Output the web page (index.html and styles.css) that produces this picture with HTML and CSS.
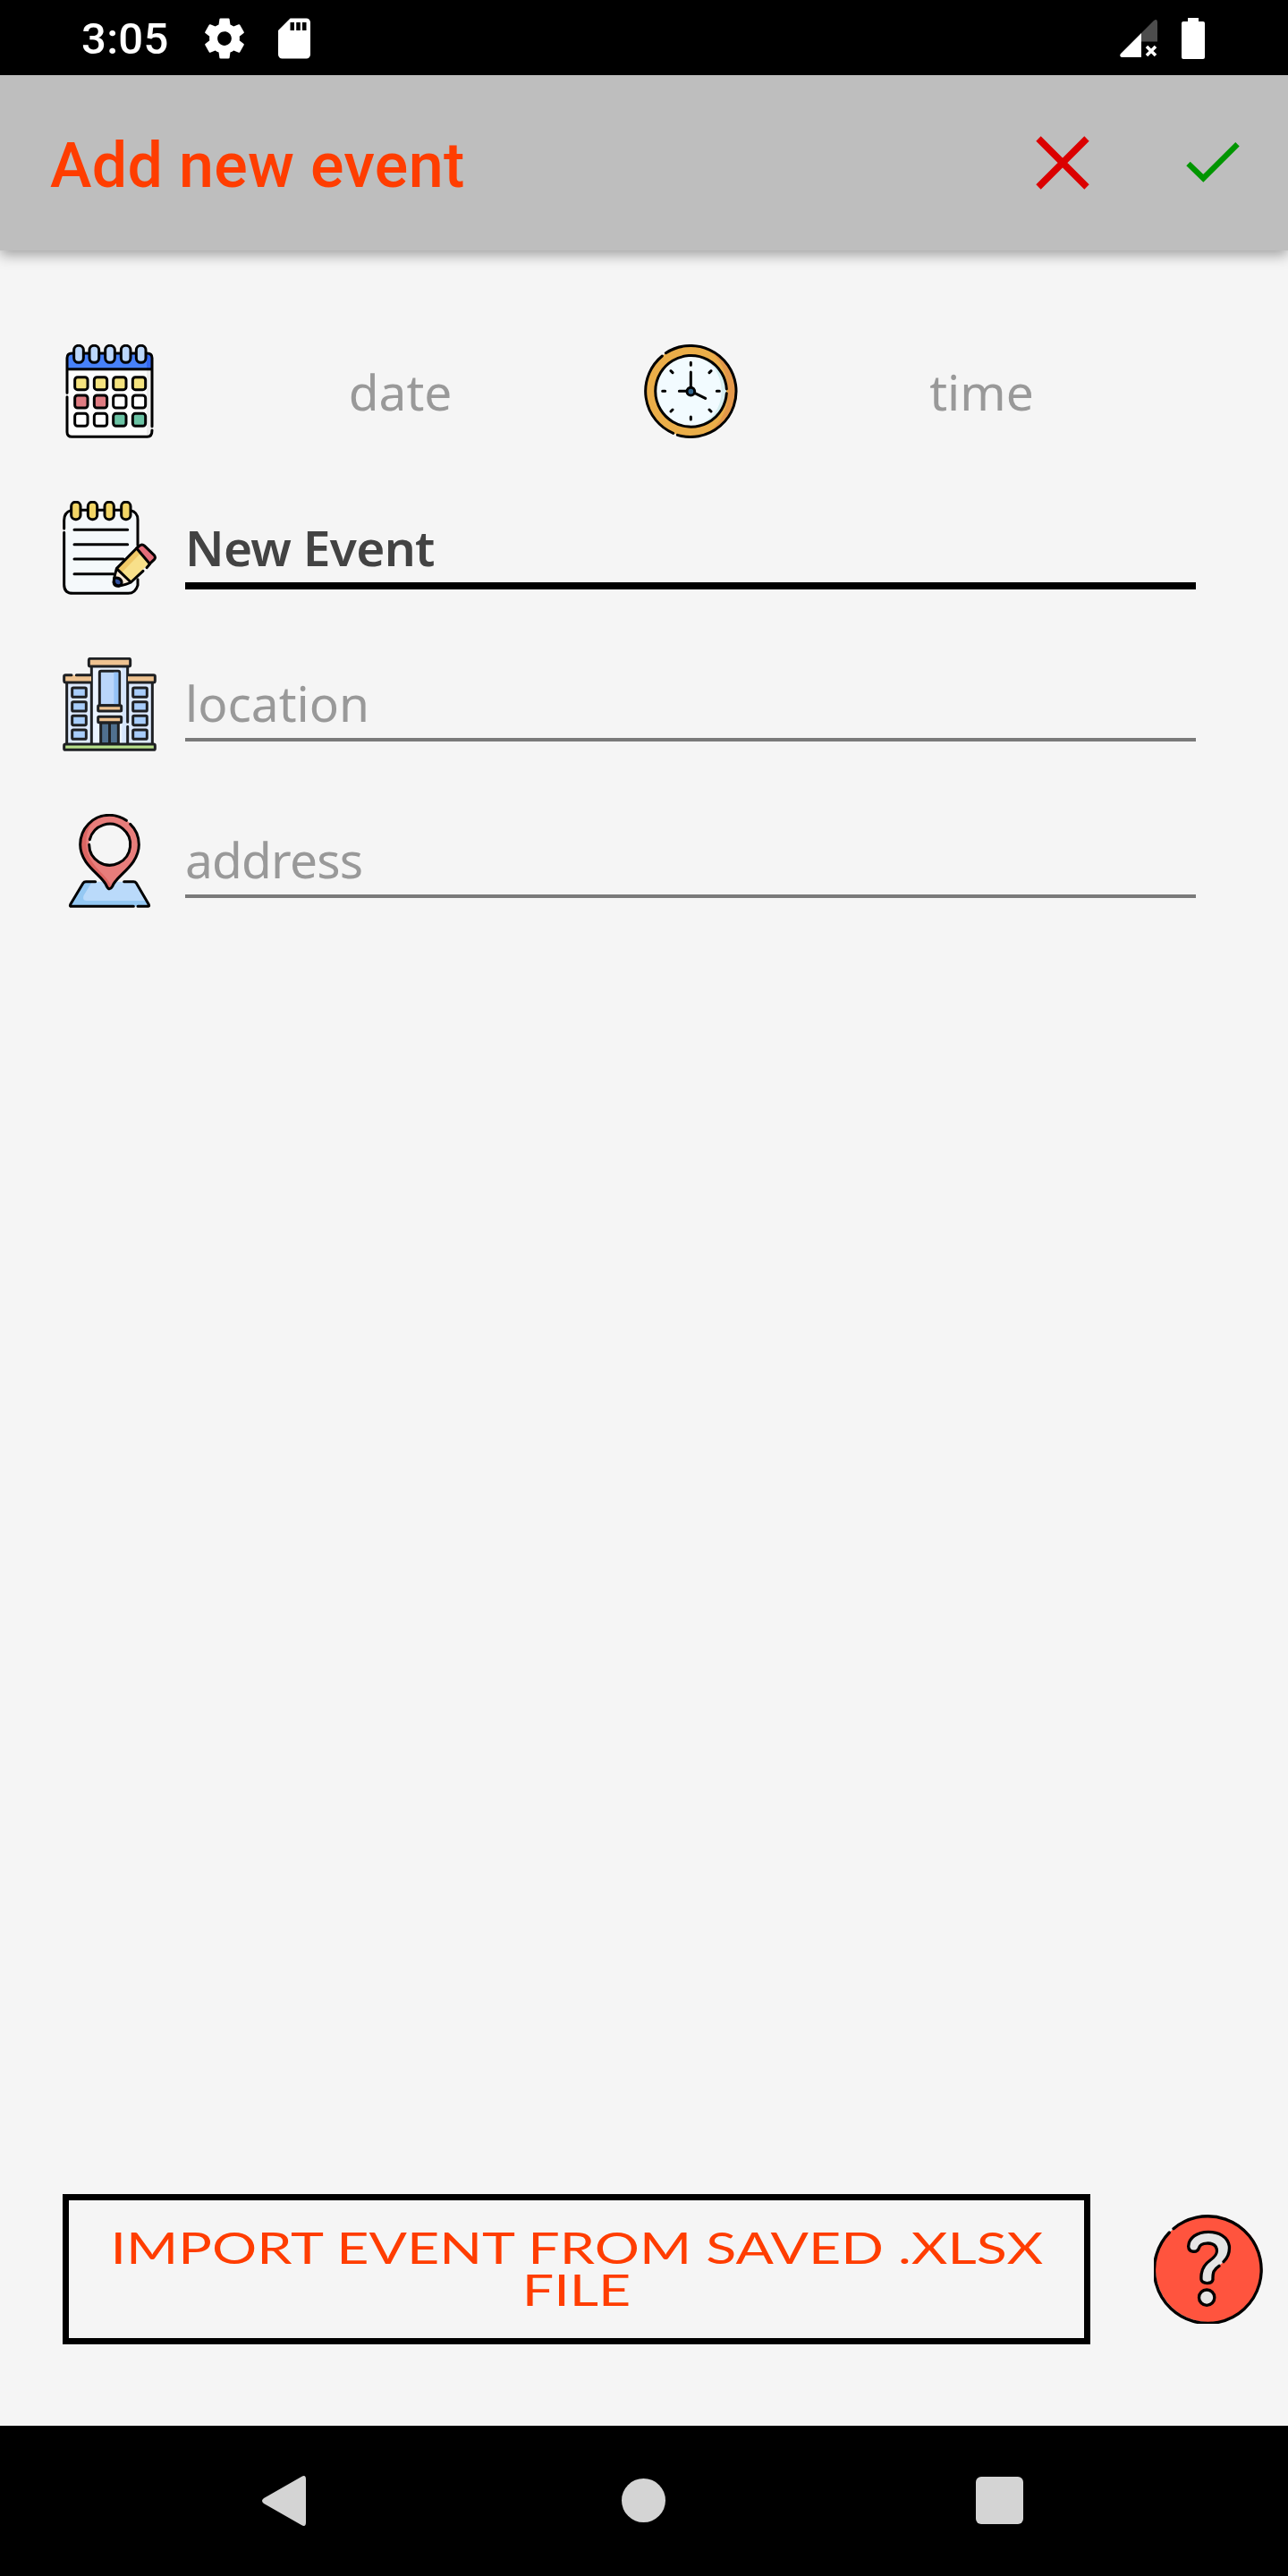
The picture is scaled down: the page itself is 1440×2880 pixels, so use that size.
FILE: index.html
```html
<!DOCTYPE html>
<html lang="en">
<head>
  <meta charset="UTF-8" />
  <meta name="viewport" content="width=device-width, initial-scale=1.0" />
  <title>Add new event</title>
  <link rel="stylesheet" href="styles.css">
</head>
<body>
  <div class="status-bar">
    <span class="clock">3:05</span>
    <svg class="gear" viewBox="0 0 24 24" fill="#fff"><path d="M19.43 12.98c.04-.32.07-.64.07-.98s-.03-.66-.07-.98l2.11-1.65c.19-.15.24-.42.12-.64l-2-3.46c-.12-.22-.39-.3-.61-.22l-2.49 1c-.52-.4-1.08-.73-1.69-.98l-.38-2.65C14.46 2.18 14.25 2 14 2h-4c-.25 0-.46.18-.49.42l-.38 2.65c-.61.25-1.17.59-1.69.98l-2.49-1c-.23-.09-.49 0-.61.22l-2 3.46c-.13.22-.07.49.12.64l2.11 1.65c-.04.32-.07.65-.07.98s.03.66.07.98l-2.11 1.65c-.19.15-.24.42-.12.64l2 3.46c.12.22.39.3.61.22l2.49-1c.52.4 1.08.73 1.69.98l.38 2.65c.03.24.24.42.49.42h4c.25 0 .46-.18.49-.42l.38-2.65c.61-.25 1.17-.59 1.69-.98l2.49 1c.23.09.49 0 .61-.22l2-3.46c.12-.22.07-.49-.12-.64l-2.11-1.65zM12 15.5c-1.93 0-3.5-1.57-3.5-3.5s1.57-3.5 3.5-3.5 3.5 1.57 3.5 3.5-1.57 3.5-3.5 3.5z"/></svg>
    <svg class="sd" viewBox="0 0 24 24" fill="#fff"><path d="M18 2h-8L4.02 8 4 20c0 1.100.9 2 2 2h12c1.100 0 2-.9 2-2V4c0-1.100-.9-2-2-2zm-6 6h-2V4h2v4zm3 0h-2V4h2v4zm3 0h-2V4h2v4z"/></svg>
    <svg class="signal" viewBox="0 0 42 42"><path d="M24 15 37.500 1.500Q42-2 42 3V24.500H24Z" fill="#4d4d4d"/><path d="M24 15V42H2Q-1 41 1 38Z" fill="#fff"/><path d="m30 30 10 10m0-10-10 10" stroke="#fff" stroke-width="3.600"/></svg>
    <svg class="battery" viewBox="0 0 26 46" fill="#fff"><path d="M7 0H19V4H24Q26 4 26 6V44Q26 46 24 46H2Q0 46 0 44V6Q0 4 2 4H7Z"/></svg>
  </div>

  <header>
    <h1>Add new event</h1>
    <svg class="close" viewBox="0 0 60 60"><path d="M3 3 57 57M57 3 3 57" stroke="#db0000" stroke-width="7.600"/></svg>
    <svg class="check" viewBox="0 0 60 46"><path d="M2.500 24 19.300 40.300 57.500 2.300" fill="none" stroke="#009600" stroke-width="6.300"/></svg>
  </header>

  <main>
    <div class="row">
      <svg class="icon" viewBox="60 45 315 315">
        <path d="M75 128H360V342Q360 355 347 355H88Q75 355 75 342Z" fill="#fdfdfd"/>
        <path d="M342 128H360V355H342Z" fill="#eee"/>
        <path d="M75 128V91Q75 75 91 75H344Q360 75 360 91V128Z" fill="#4781fa"/>
        <path d="M342 76Q360 77 360 92V127H342Z" fill="#3467ef"/>
        <g class="line">
          <path d="M75 208V91Q75 75 91 75H344Q360 75 360 91V320M75 221V339Q75 355 91 355H344Q360 355 360 333M76 128H359"/>
          <g fill="#bcd7fb"><rect x="98" y="49" width="32" height="57" rx="15"/><rect x="150" y="49" width="32" height="57" rx="15"/><rect x="203" y="49" width="32" height="57" rx="15"/><rect x="256" y="49" width="32" height="57" rx="15"/><rect x="307" y="49" width="32" height="57" rx="15"/></g>
          <g fill="#f5e37f"><rect x="101" y="155" width="43" height="42" rx="9"/><rect x="166" y="155" width="43" height="42" rx="9"/><rect x="230" y="155" width="43" height="42" rx="9"/><rect x="295" y="155" width="43" height="42" rx="9"/></g>
          <g fill="#df7c82"><rect x="101" y="216" width="43" height="42" rx="9"/><rect x="166" y="216" width="43" height="42" rx="9"/></g>
          <g fill="#fff"><rect x="230" y="216" width="43" height="42" rx="9"/><rect x="295" y="216" width="43" height="42" rx="9"/><rect x="101" y="277" width="43" height="42" rx="9"/><rect x="166" y="277" width="43" height="42" rx="9"/></g>
          <g fill="#6bc3a4"><rect x="230" y="277" width="43" height="42" rx="9"/><rect x="295" y="277" width="43" height="42" rx="9"/></g>
        </g>
      </svg>
      <div class="picker">date</div>
      <svg class="icon" viewBox="60 45 315 315">
        <circle cx="217.500" cy="202" r="153" fill="#ebae49"/>
        <path d="M275 61A153 153 0 0 1 275 343Q345 285 342 202Q338 110 275 61Z" fill="#e4984a"/>
        <circle cx="217.500" cy="202" r="119" fill="#d6eff1"/>
        <path d="M232 84A119 119 0 1 0 232 320Q318 290 320 202Q318 110 232 84Z" fill="#f2fbff"/>
        <g class="line">
          <path d="M133 74A153 153 0 1 1 172 349M158 343A153 153 0 0 1 121 84"/>
          <path d="M337 209A119.500 119.500 0 1 1 337 195"/>
          <path d="M217 188V138M202 202H178M231 209 266 226M217 106V115M217 288V297M122 202H131M304 202H313M150 134 156 140M285 134 279 140M150 270 156 264M285 270 279 264"/>
          <circle cx="217" cy="203" r="13" fill="#2f638c"/>
        </g>
      </svg>
      <div class="picker">time</div>
    </div>

    <div class="row">
      <svg class="icon" viewBox="60 45 315 315">
        <rect x="65" y="76" width="247" height="279" rx="30" fill="#f5f9fb"/>
        <g class="line">
          <path d="M65 138V110Q65 84 88 77M120 76H144M177 76H200M233 76H256M288 77Q312 83 312 108V194M65 151V326Q65 355 95 355H280Q304 355 312 328V308"/>
          <path d="M99 142H278M99 191H278M99 240H264M99 290H230"/>
          <g fill="#f2d566"><rect x="89" y="49" width="31" height="58" rx="14"/><rect x="145" y="49" width="31" height="58" rx="14"/><rect x="201" y="49" width="31" height="58" rx="14"/><rect x="257" y="49" width="31" height="58" rx="14"/></g>
          <path d="M241 272 304 207 351 253 289 318 243 331Q229 326 232 309Z" fill="#f8e08a" stroke="none"/>
          <path d="M241 272 304 207 320 222 257 287Z" fill="#f0c866" stroke="none"/>
          <path d="M241 272 289 318 249 330 232 306Z" fill="#fcebd6" stroke="none"/>
          <path d="M233 304Q250 300 257 313Q262 326 249 330Q229 330 233 304Z" fill="#31509d"/>
          <path d="M308 204 320 194Q328 189 335 196L366 226Q374 235 367 242L352 256Z" fill="#e46c78"/>
          <path d="M308 204 241 272Q235 290 231 318Q233 331 247 331Q274 326 289 318L330 280M342 269 352 257M241 272 289 318"/>
        </g>
      </svg>
      <input class="field focused" value="New Event">
    </div>

    <div class="row">
      <svg class="icon" viewBox="60 45 315 315">
        <path d="M72 129H157V336H72ZM278 129H363V336H278Z" fill="#dce9fd"/>
        <path d="M157 74H278V336H157Z" fill="#ebf3ff"/>
        <path d="M259 76H276V336H259Z" fill="#d5e5fb"/>
        <g class="line dark">
          <path d="M74 130V335M157 77V335M278 77V262M278 277V335M361 130V335"/>
          <path d="M65 104H156V129H65ZM279 104H370V129H279Z" fill="#efc391" stroke="none"/>
          <path d="M90 104H70Q65 104 65 109V123Q65 129 71 129H155M106 104H155M280 104H365Q370 104 370 109V124Q370 129 365 129H280"/>
          <rect x="148" y="49" width="139" height="26" rx="5" fill="#efc391"/>
          <rect x="184" y="91" width="67" height="115" rx="5" fill="#bad6fb"/>
          <path d="M232 95H247V202H232Z" fill="#94c2f7" stroke="none"/>
          <rect x="179" y="206" width="78" height="19" rx="3" fill="#efc391"/>
          <path d="M188 264H247V335H188Z" fill="#50708f"/>
          <path d="M217.500 265V335"/>
          <rect x="179" y="244" width="78" height="19" rx="3" fill="#efc391"/>
          <g fill="#a8cdfa"><rect x="92" y="147" width="47" height="31" rx="4"/><rect x="92" y="194" width="47" height="31" rx="4"/><rect x="92" y="241" width="47" height="31" rx="4"/><rect x="92" y="288" width="47" height="31" rx="4"/><rect x="296" y="147" width="47" height="31" rx="4"/><rect x="296" y="194" width="47" height="31" rx="4"/><rect x="296" y="241" width="47" height="31" rx="4"/><rect x="296" y="288" width="47" height="31" rx="4"/></g>
          <rect x="65" y="336" width="305" height="19" rx="5" fill="#b8e08b"/>
        </g>
      </svg>
      <input class="field" placeholder="location">
    </div>

    <div class="row">
      <svg class="icon" viewBox="60 45 315 315">
        <path d="M132 272H303L349 355H86Z" fill="#badafa"/>
        <path d="M132 272H159L131 318Q124 335 140 336H339L349 355H86Z" fill="#94c8f3"/>
        <path d="M217 49C160 49 119 95 119 148C119 219 198 253 208 288Q217 305 227 288C237 253 316 219 316 148C316 95 275 49 217 49Z" fill="#e77d7b"/>
        <path d="M175 60C139 77 119 111 119 148C119 219 198 253 208 288Q217 305 223 291C218 250 139 222 139 140C139 105 150 82 175 60Z" fill="#dd6562"/>
        <circle cx="217.500" cy="148" r="69" fill="#f5f5f5"/>
        <g class="line">
          <path d="M274 67C255 54 235 49 217 49C160 49 119 95 119 148C119 219 198 253 208 288Q217 305 227 288C237 253 316 219 316 148C316 120 305 96 287 79"/>
          <path d="M151 131A69 69 0 1 1 149 148"/>
          <path d="M170 272H138Q132 272 129 277L86 349Q83 355 90 355H298M266 272H298Q304 272 307 277L349 349Q352 355 346 355H312"/>
        </g>
      </svg>
      <input class="field address" placeholder="address">
    </div>
  </main>

  <footer>
    <button class="import"><span class="wide">IMPORT EVENT FROM SAVED .XLSX</span><span class="wide">FILE</span></button>
    <svg class="help" viewBox="57 45 369 369">
      <circle cx="241.500" cy="229.500" r="179" fill="#ff543e"/>
      <g class="line help-line">
        <path d="M123 95A179.500 179.500 0 1 1 109 108"/>
        <path d="M283 213C307 194 312 174 310 153C305 122 275 106 240 106C201 106 174 127 173 154C174 176 203 178 209 158C214 142 252 138 265 156C274 174 266 187 246 201C220 219 214 240 216 266C219 281 252 282 255 266C255 240 257 232 283 213Z" fill="#e5e5e5" stroke="none"/>
        <path d="M291 206C307 190 312 174 310 153C305 122 275 106 240 106C201 106 174 127 173 154C174 176 203 178 209 158C214 142 252 138 265 156C274 174 266 187 246 201C220 219 214 240 216 266C219 281 252 282 255 266C254 242 258 232 276 220"/>
        <circle cx="234.500" cy="326" r="26" fill="#e5e5e5"/>
      </g>
    </svg>
  </footer>

  <nav>
    <svg class="back" viewBox="0 0 50 56"><path d="M44 1Q49-2 49 4V52Q49 58 44 55L2 31Q-2 28 2 25Z"/></svg>
    <div class="home"></div>
    <div class="recent"></div>
  </nav>
</body>
</html>
```

FILE: styles.css
```css
* { box-sizing: border-box; }
body { margin: 0; width: 1440px; height: 2880px; display: flex; flex-direction: column; background: #f5f5f5; font-family: "Noto Sans", sans-serif; overflow: hidden; }
svg { display: block; flex: none; }

.status-bar { height: 84px; flex: none; background: #000; color: #fff; display: flex; align-items: center; padding: 1px 93px 0 91px; }
.clock { width: 133px; font: 500 49px/84px Roboto, sans-serif; padding-top: 2px; letter-spacing: 0.3px; }
.gear { width: 54px; height: 54px; }
.sd { width: 54px; height: 54px; margin-left: 24px; }
.signal { width: 42px; height: 42px; margin-left: auto; overflow: hidden; }
.battery { width: 26px; height: 46px; margin-left: 27px; }

header { height: 196px; flex: none; background: #bebebe; display: flex; align-items: center; padding: 0 54px 0 56px; box-shadow: 0 5px 14px rgba(0,0,0,0.35); position: relative; }
h1 { margin: 0 auto 0 0; padding-top: 6px; font: 500 70px/82px Roboto, sans-serif; letter-spacing: 0.3px; color: #ff3d00; }
.close { width: 60px; height: 60px; }
.check { width: 60px; height: 46px; margin-left: 108px; }

main { padding: 105px 70px 0; display: flex; flex-direction: column; gap: 70px; }
.row { display: flex; height: 105px; }
.icon { width: 105px; height: 105px; }
.line { fill: none; stroke: #000; stroke-width: 9; stroke-linecap: round; stroke-linejoin: round; }
.dark { stroke: #1e2023; }
.help-line { stroke-width: 10; }
.picker { flex: 1; text-align: center; line-height: 105px; font-size: 55px; color: #999; }
.field { width: 1130px; height: 94px; margin-left: 32px; padding: 10px 0 0; border: 0; border-bottom: 4px solid #7a7a7a; background: none; font: 55px "Noto Sans", sans-serif; color: #434343; outline: none; }
.field::placeholder { color: #999; opacity: 1; }
.address { letter-spacing: -0.8px; }
.focused { height: 99px; padding-top: 12px; border-bottom: 8px solid #000; font-weight: 600; letter-spacing: -0.7px; }

footer { margin-top: auto; padding: 0 27px 91px 70px; display: flex; align-items: center; gap: 70px; }
.import { width: 1149px; height: 168px; padding: 0 0 3px; border: 7px solid #000; background: none; color: #ff3d00; font: 48px/47px Lato, sans-serif; display: flex; flex-direction: column; align-items: center; justify-content: center; }
.wide { transform: scaleX(1.307); white-space: nowrap; }
.help { width: 123px; height: 123px; margin: 0 0 2px 1px; }

nav { height: 168px; flex: none; background: #000; display: flex; align-items: center; padding: 0 0 1px 293px; }
.back { width: 50px; height: 56px; fill: #d4d4d4; }
.home { width: 49px; height: 49px; margin-left: 352px; border-radius: 50%; background: #d4d4d4; }
.recent { width: 53px; height: 53px; margin-left: 347px; border-radius: 6px; background: #d4d4d4; }
```
